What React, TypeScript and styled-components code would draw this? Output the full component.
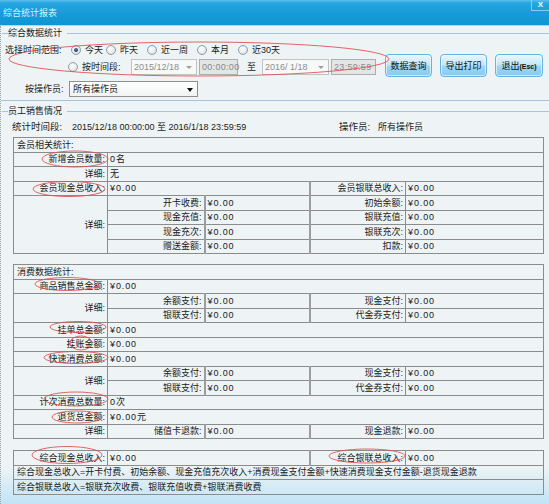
import React from "react";
import styled, { createGlobalStyle } from "styled-components";

const GlobalStyle = createGlobalStyle`
  html, body {
    margin: 0;
    padding: 0;
    background: #eef4f5;
  }
`;

const Window = styled.div`
  position: relative;
  width: 549px;
  height: 504px;
  display: flex;
  flex-direction: column;
  overflow: hidden;
  font-family: "Liberation Sans", "Noto Sans CJK SC", sans-serif;
  font-size: 9px;
  line-height: 12px;
  color: #1a1a1a;
`;

const TitleBar = styled.div`
  flex: none;
  height: 25px;
  display: flex;
  align-items: center;
  padding-left: 3px;
  background: linear-gradient(#5cc0ec 0, #27a5df 3px, #169cd9 55%, #0f95d3 100%);
  border-bottom: 1px solid #a4daf2;
  color: #d8f0fb;
`;

const CloseBox = styled.span`
  margin-left: auto;
  align-self: flex-start;
  width: 17px;
  height: 10px;
  border-left: 1px solid #86cdee;
  border-bottom: 1px solid #86cdee;
  color: #f4fbff;
  font: bold 8px/10px "Liberation Sans", sans-serif;
  text-align: center;
`;

const Body = styled.div`
  flex: 1;
  display: flex;
  flex-direction: column;
  border-left: 1px dotted #9aa3a8;
  background: linear-gradient(#eef4f5 0, #eef4f5 440px, #c2e3f6 100%);
`;

const GroupHead = styled.div<{ $top: number }>`
  display: flex;
  align-items: center;
  height: 12px;
  margin-top: ${(p) => p.$top}px;

  &::before {
    content: "";
    width: 6px;
    height: 1px;
    margin-left: 1px;
    background: #a6c3da;
  }
  &::after {
    content: "";
    flex: 1;
    height: 1px;
    background: #a6c3da;
  }
`;

const Legend = styled.span`
  padding-right: 5px;
`;

const GroupLine = styled.div`
  height: 1px;
  margin-top: 3px;
  background: #a6c3da;
`;

const FilterArea = styled.div`
  display: flex;
  margin-top: 4px;
  padding: 0 6px 0 4px;
`;

const FilterRows = styled.div`
  display: flex;
  flex-direction: column;
  gap: 2px;
`;

const FilterRow = styled.div<{ $h: number; $indent?: number; $top?: number }>`
  display: flex;
  align-items: center;
  height: ${(p) => p.$h}px;
  padding-left: ${(p) => p.$indent ?? 0}px;
  margin-top: ${(p) => p.$top ?? 0}px;
`;

const FieldLabel = styled.span<{ $w: number }>`
  flex: none;
  width: ${(p) => p.$w}px;
  white-space: nowrap;
`;

const Option = styled.label<{ $w?: number }>`
  display: flex;
  align-items: center;
  gap: 4px;
  flex: none;
  width: ${(p) => (p.$w ? `${p.$w}px` : "auto")};
  white-space: nowrap;
`;

const RadioDot = styled.span<{ $on?: boolean }>`
  position: relative;
  flex: none;
  width: 8px;
  height: 8px;
  border: 1px solid #8e9ba7;
  border-radius: 50%;
  background: radial-gradient(circle at 40% 35%, #ffffff 0, #e9ecef 55%, #c9d0d6 100%);

  &::after {
    content: "";
    display: ${(p) => (p.$on ? "block" : "none")};
    position: absolute;
    left: 2px;
    top: 2px;
    width: 4px;
    height: 4px;
    border-radius: 50%;
    background: radial-gradient(circle at 40% 35%, #5a7db0 0, #1b3b6b 70%);
  }
`;

const DateBox = styled.div<{ $w: number }>`
  position: relative;
  flex: none;
  box-sizing: border-box;
  width: ${(p) => p.$w}px;
  height: 16px;
  padding-left: 2px;
  border: 1px solid #c3c3c3;
  background: #f7f8f8;
  color: #8e8e8e;
  line-height: 14px;
  white-space: pre;

  &::after {
    content: "";
    position: absolute;
    right: 4px;
    top: 6px;
    border-left: 3px solid transparent;
    border-right: 3px solid transparent;
    border-top: 3px solid #a0a0a0;
  }
`;

const TimeBox = styled.div<{ $w: number }>`
  flex: none;
  box-sizing: border-box;
  width: ${(p) => p.$w}px;
  height: 16px;
  margin-left: 2px;
  padding-left: 2px;
  border: 1px solid #adadad;
  background: #e4e5e5;
  color: #8a8a8a;
  line-height: 14px;
  letter-spacing: 0.3px;
`;

const ToWord = styled.span`
  margin: 0 6px 0 9px;
`;

const ButtonBar = styled.div`
  display: flex;
  gap: 8px;
  margin-left: auto;
  align-self: flex-end;
  margin-bottom: -2px;
`;

const ActionButton = styled.button<{ $w: number }>`
  width: ${(p) => p.$w}px;
  height: 23px;
  padding: 0;
  border: 1px solid #63b3e3;
  border-radius: 4px;
  background: linear-gradient(#eaf7fe 0, #c4e7fa 45%, #9dd6f4 55%, #86caf0 100%);
  box-shadow: inset 0 0 0 1px rgba(255, 255, 255, 0.6);
  font-family: "Liberation Sans", "Noto Sans CJK SC", sans-serif;
  font-size: 9px;
  color: #111;
  white-space: nowrap;
`;

const KeyHint = styled.span`
  font-size: 7px;
  font-weight: bold;
`;

const SelectBox = styled.div`
  position: relative;
  flex: none;
  box-sizing: border-box;
  width: 129px;
  height: 16px;
  padding-left: 3px;
  border: 1px solid #8f8f8f;
  background: linear-gradient(#ffffff, #f1f2f2);
  line-height: 14px;

  &::after {
    content: "";
    position: absolute;
    right: 4px;
    top: 6px;
    border-left: 3px solid transparent;
    border-right: 3px solid transparent;
    border-top: 4px solid #111;
  }
`;

const StatsLine = styled.div`
  display: flex;
  align-items: center;
  height: 12px;
  margin-top: 4px;
  padding-left: 11px;
  white-space: nowrap;
`;

const StatsPart = styled.div<{ $w?: number }>`
  display: flex;
  width: ${(p) => (p.$w ? `${p.$w}px` : "auto")};
`;

const StatLabel = styled.span<{ $w: number }>`
  width: ${(p) => p.$w}px;
  font-size: 9.5px;
`;

const Table = styled.table<{ $top: number }>`
  width: 530px;
  margin: ${(p) => p.$top}px 0 0 12px;
  border-collapse: collapse;
  table-layout: fixed;
  border: 1px solid #7c7c7c;
`;

const Row = styled.tr`
  height: 14.5px;
`;

const HeadCell = styled.td`
  padding: 0 0 0 3px;
  border: 1px solid #8c8c8c;
  text-align: left;
  white-space: nowrap;
`;

const LabelCell = styled.td<{ $thick?: boolean }>`
  padding: 0 2px 0 0;
  border: 1px solid #8c8c8c;
  ${(p) => (p.$thick ? "border-left: 2px solid #9c9c9c;" : "")}
  text-align: right;
  white-space: nowrap;
`;

const ValueCell = styled.td<{ $thick?: boolean }>`
  padding: 0 0 0 2px;
  border: 1px solid #8c8c8c;
  ${(p) => (p.$thick ? "border-left: 2px solid #9c9c9c;" : "")}
  letter-spacing: 0.9px;
  white-space: nowrap;
`;

const Marks = styled.svg`
  position: absolute;
  left: 0;
  top: 0;
  pointer-events: none;
`;

const Cols = () => (
  <colgroup>
    <col style={{ width: 94 }} />
    <col style={{ width: 97 }} />
    <col style={{ width: 105 }} />
    <col style={{ width: 96 }} />
    <col style={{ width: 138 }} />
  </colgroup>
);

type Pair = [string, string];

const DetailBlock: React.FC<{ rows: [Pair, Pair][] }> = ({ rows }) => (
  <>
    {rows.map(([a, b], i) => (
      <Row key={a[0]}>
        {i === 0 && <LabelCell rowSpan={rows.length}>详细:</LabelCell>}
        <LabelCell>{a[0]}:</LabelCell>
        <ValueCell $thick>{a[1]}</ValueCell>
        <LabelCell $thick>{b[0]}:</LabelCell>
        <ValueCell>{b[1]}</ValueCell>
      </Row>
    ))}
  </>
);

const SingleRow: React.FC<{ label: string; value: string }> = ({ label, value }) => (
  <Row>
    <LabelCell>{label}:</LabelCell>
    <ValueCell colSpan={4}>{value}</ValueCell>
  </Row>
);

const PAY: [Pair, Pair][] = [
  [["余额支付", "¥0.00"], ["现金支付", "¥0.00"]],
  [["银联支付", "¥0.00"], ["代金券支付", "¥0.00"]],
];

const marks = [
  { cx: 199, cy: 59, rx: 190, ry: 17 },
  { cx: 75, cy: 159, rx: 33, ry: 8 },
  { cx: 69, cy: 189, rx: 36, ry: 7.5 },
  { cx: 67, cy: 284, rx: 32, ry: 6.5 },
  { cx: 78, cy: 327, rx: 28, ry: 5.5 },
  { cx: 81, cy: 343, rx: 11, ry: 7 },
  { cx: 76, cy: 357.5, rx: 32, ry: 6 },
  { cx: 76, cy: 399, rx: 32, ry: 7 },
  { cx: 77, cy: 417, rx: 25, ry: 6 },
  { cx: 67, cy: 455, rx: 35, ry: 8.5 },
  { cx: 367, cy: 456, rx: 38, ry: 7 },
];

export default function App() {
  return (
    <Window>
      <GlobalStyle />
      <TitleBar>
        <span>综合统计报表</span>
        <CloseBox>X</CloseBox>
      </TitleBar>
      <Body>
        <GroupHead $top={1}>
          <Legend>综合数据统计</Legend>
        </GroupHead>
        <FilterArea>
          <FilterRows>
            <FilterRow $h={14}>
              <FieldLabel $w={66}>选择时间范围:</FieldLabel>
              <Option $w={35}>
                <RadioDot $on />
                今天
              </Option>
              <Option $w={41}>
                <RadioDot />
                昨天
              </Option>
              <Option $w={50}>
                <RadioDot />
                近一周
              </Option>
              <Option $w={41}>
                <RadioDot />
                本月
              </Option>
              <Option>
                <RadioDot />
                近30天
              </Option>
            </FilterRow>
            <FilterRow $h={16} $indent={63}>
              <Option $w={63}>
                <RadioDot />
                按时间段:
              </Option>
              <DateBox $w={66}>2015/12/18</DateBox>
              <TimeBox $w={39}>00:00:00</TimeBox>
              <ToWord>至</ToWord>
              <DateBox $w={67}>2016/ 1/18</DateBox>
              <TimeBox $w={45}>23:59:59</TimeBox>
            </FilterRow>
          </FilterRows>
          <ButtonBar>
            <ActionButton $w={47}>数据查询</ActionButton>
            <ActionButton $w={47}>导出打印</ActionButton>
            <ActionButton $w={48}>
              退出<KeyHint>(Esc)</KeyHint>
            </ActionButton>
          </ButtonBar>
        </FilterArea>
        <FilterRow $h={16} $indent={24} $top={6}>
          <FieldLabel $w={44}>按操作员:</FieldLabel>
          <SelectBox>所有操作员</SelectBox>
        </FilterRow>
        <GroupLine />

        <GroupHead $top={4}>
          <Legend>员工销售情况</Legend>
        </GroupHead>
        <StatsLine>
          <StatsPart $w={327}>
            <StatLabel $w={60}>统计时间段:</StatLabel>
            <span>2015/12/18 00:00:00 至 2016/1/18 23:59:59</span>
          </StatsPart>
          <StatsPart>
            <StatLabel $w={39}>操作员:</StatLabel>
            <span>所有操作员</span>
          </StatsPart>
        </StatsLine>

        <Table $top={4}>
          <Cols />
          <tbody>
            <Row>
              <HeadCell colSpan={5}>会员相关统计:</HeadCell>
            </Row>
            <SingleRow label="新增会员数量" value="0名" />
            <SingleRow label="详细" value="无" />
            <Row>
              <LabelCell>会员现金总收入:</LabelCell>
              <ValueCell colSpan={2}>¥0.00</ValueCell>
              <LabelCell $thick>会员银联总收入:</LabelCell>
              <ValueCell>¥0.00</ValueCell>
            </Row>
            <DetailBlock
              rows={[
                [["开卡收费", "¥0.00"], ["初始余额", "¥0.00"]],
                [["现金充值", "¥0.00"], ["银联充值", "¥0.00"]],
                [["现金充次", "¥0.00"], ["银联充次", "¥0.00"]],
                [["赠送金额", "¥0.00"], ["扣款", "¥0.00"]],
              ]}
            />
          </tbody>
        </Table>

        <Table $top={10}>
          <Cols />
          <tbody>
            <Row>
              <HeadCell colSpan={5}>消费数据统计:</HeadCell>
            </Row>
            <SingleRow label="商品销售总金额" value="¥0.00" />
            <DetailBlock rows={PAY} />
            <SingleRow label="挂单总金额" value="¥0.00" />
            <SingleRow label="挂账金额" value="¥0.00" />
            <SingleRow label="快速消费总额" value="¥0.00" />
            <DetailBlock rows={PAY} />
            <SingleRow label="计次消费总数量" value="0次" />
            <SingleRow label="退货总金额" value="¥0.00元" />
            <DetailBlock rows={[[["储值卡退款", "¥0.00"], ["现金退款", "¥0.00"]]]} />
          </tbody>
        </Table>

        <Table $top={11}>
          <Cols />
          <tbody>
            <Row>
              <LabelCell>综合现金总收入:</LabelCell>
              <ValueCell colSpan={2}>¥0.00</ValueCell>
              <LabelCell $thick>综合银联总收入:</LabelCell>
              <ValueCell>¥0.00</ValueCell>
            </Row>
            <Row>
              <HeadCell colSpan={5}>
                综合现金总收入=开卡付费、初始余额、现金充值充次收入+消费现金支付金额+快速消费现金支付金额-退货现金退款
              </HeadCell>
            </Row>
            <Row>
              <HeadCell colSpan={5}>综合银联总收入=银联充次收费、银联充值收费+银联消费收费</HeadCell>
            </Row>
          </tbody>
        </Table>
      </Body>

      <Marks width={549} height={504} viewBox="0 0 549 504">
        {marks.map((m, i) => (
          <ellipse
            key={i}
            cx={m.cx}
            cy={m.cy}
            rx={m.rx}
            ry={m.ry}
            fill="none"
            stroke="#e24a4a"
            strokeOpacity={0.85}
            strokeWidth={1}
          />
        ))}
      </Marks>
    </Window>
  );
}
